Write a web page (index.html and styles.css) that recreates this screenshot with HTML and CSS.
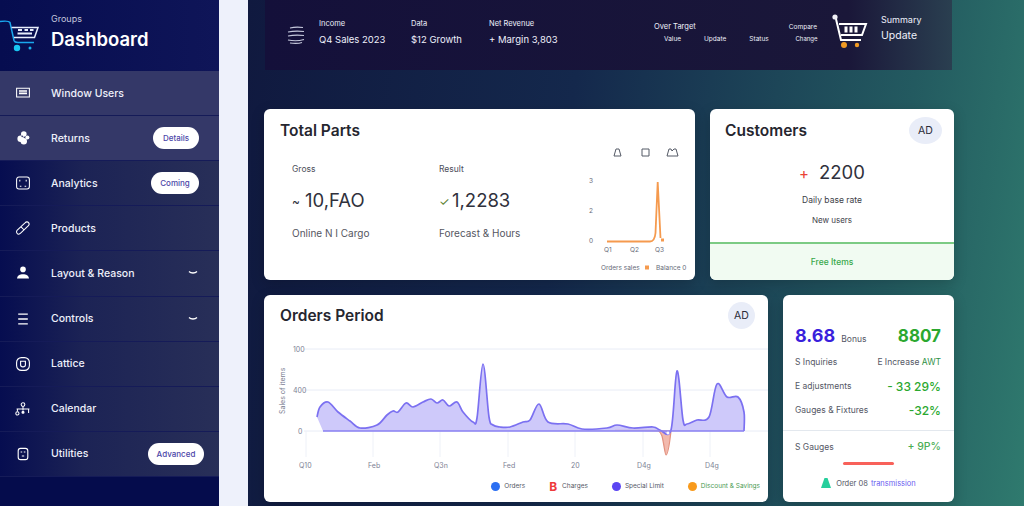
FILE: index.html
```html
<!DOCTYPE html>
<html lang="en">
  <head>
    <meta charset="UTF-8" />
    <title>Dashboard</title>
    <meta name="viewport" content="width=device-width, initial-scale=1.0" />
    <link rel="stylesheet" href="styles.css">
  </head>
  <body>
    <aside class="sidebar">
      <div class="brand">
        <svg class="brand-logo" width="40" height="36" viewBox="0 0 40 36" fill="none">
          <path d="M0 2.500C4 2 9 2 10 3.500L14 21.500C14.500 23 16 23.500 18 23.500H34" stroke="#19a7ee" stroke-width="1.500"/>
          <path d="M11.500 8.500H38L34.500 18.500H14" stroke="#e8eefc" stroke-width="1.500"/>
          <path d="M18 11H22M24.500 11H28M30 11H33.500M17.500 14.500H32" stroke="#e8eefc" stroke-width="2"/>
          <circle cx="17" cy="29" r="3.200" fill="#19c6f2"/>
          <circle cx="30" cy="29" r="1.500" fill="#19b3ee"/>
        </svg>
        <div>
          <div class="brand-small">Groups</div>
          <div class="brand-name">Dashboard</div>
        </div>
      </div>
      <nav class="nav">
        <a class="nav-item active">
          <svg class="nav-icon" viewBox="0 0 20 20" fill="none" stroke="#fff" stroke-width="1.300"><path d="M2 4H18V15H2Z"/><path d="M5 7.500H15M5 10.500H15" stroke-width="2"/></svg>
          <span>Window Users</span>
        </a>
        <a class="nav-item active">
          <svg class="nav-icon" viewBox="0 0 20 20" fill="#fff"><circle cx="11" cy="5" r="3.500"/><circle cx="7" cy="11" r="4"/><circle cx="11" cy="14" r="4"/><circle cx="15.500" cy="9.500" r="2.500"/><circle cx="9" cy="8" r="1" fill="#343868"/></svg>
          <span>Returns</span>
          <b class="pill">Details</b>
        </a>
        <a class="nav-item">
          <svg class="nav-icon" viewBox="0 0 20 20" fill="none" stroke="#fff" stroke-width="1.300"><path d="M5 2.500H15C17 2.500 18 4 18 6V14C18 16.500 17 17.500 15 17.500H5C3 17.500 2 16.500 2 14V6C2 4 3 2.500 5 2.500Z"/><path d="M6 6V8M14 6V8M6 14H8M12 14H14"/></svg>
          <span>Analytics</span>
          <b class="pill pill-wide">Coming</b>
        </a>
        <a class="nav-item">
          <svg class="nav-icon" viewBox="0 0 20 20" fill="none" stroke="#fff" stroke-width="1.300"><path d="M2.500 13L12.500 3.500C14 2 16 2 17 3.300C18 4.500 18 6 16.500 7.500L7 16.500C5.500 18 3.800 18 2.800 17C1.800 16 1.500 14.500 2.500 13Z"/><path d="M7.500 8.500L11.500 12.500"/></svg>
          <span>Products</span>
        </a>
        <a class="nav-item">
          <svg class="nav-icon" viewBox="0 0 20 20" fill="#fff"><circle cx="10" cy="5.500" r="3.500"/><path d="M2.500 17C3 13 6 11.500 10 11.500C14 11.500 17 13 17.500 17Z"/></svg>
          <span>Layout &amp; Reason</span>
          <svg class="chevron" width="10" height="6" viewBox="0 0 10 6" fill="none" stroke="#fff" stroke-width="1.300"><path d="M1 1.500C3 3.500 7 3.500 9 1.500"/></svg>
        </a>
        <a class="nav-item">
          <svg class="nav-icon" viewBox="0 0 20 20" fill="none" stroke="#fff" stroke-width="1.600"><path d="M4 4H16M4 10H16M4 16H16"/></svg>
          <span>Controls</span>
          <svg class="chevron" width="10" height="6" viewBox="0 0 10 6" fill="none" stroke="#fff" stroke-width="1.300"><path d="M1 1.500C3 3.500 7 3.500 9 1.500"/></svg>
        </a>
        <a class="nav-item">
          <svg class="nav-icon" viewBox="0 0 20 20" fill="none" stroke="#fff" stroke-width="1.400"><rect x="2" y="2" width="16" height="16" rx="6"/><path d="M7 6.500V11C7 14.500 13 14.500 13 11V6.500H7Z"/></svg>
          <span>Lattice</span>
        </a>
        <a class="nav-item">
          <svg class="nav-icon" viewBox="0 0 20 20" fill="none" stroke="#fff" stroke-width="1.300"><circle cx="10" cy="4.500" r="2.300"/><path d="M10 7V12M2 10H18M3 10V13M17 10V15"/><circle cx="3" cy="15.500" r="2"/><circle cx="10" cy="14" r="1.300" fill="#fff"/></svg>
          <span>Calendar</span>
        </a>
        <a class="nav-item">
          <svg class="nav-icon" viewBox="0 0 20 20" fill="none" stroke="#fff" stroke-width="1.400"><rect x="4" y="3" width="12" height="14" rx="3"/><path d="M7 7.500H9M11 7.500H13M8.500 12.500H11.500"/></svg>
          <span>Utilities</span>
          <b class="pill pill-big">Advanced</b>
        </a>
      </nav>
    </aside>

    <div class="strip"></div>

    <main class="main">
      <header class="topbar">
        <svg class="stack-icon" width="18" height="18" viewBox="0 0 18 18" fill="none" stroke="#c5c8dc" stroke-width="1.200"><path d="M3 2C7 1 12 1 16 1.500M1 6C6 5 12 5 17 5.500M1 10C6 9 12 9 17 9.500M1 14C6 15 12 15 17 13.500M3 17C7 17.500 12 17.500 15 16.500"/></svg>
        <div class="top-stat top-first"><small>Income</small><strong>Q4 Sales 2023</strong></div>
        <div class="top-stat top-second"><small>Data</small><strong>$12 Growth</strong></div>
        <div class="top-stat top-third"><small>Net Revenue</small><strong>+ Margin 3,803</strong></div>
        <div class="top-meta top-over">
          <small>Over Target</small>
          <div class="top-meta-row"><i>Value</i><i>Update</i><i>Status</i></div>
        </div>
        <div class="top-meta top-compare">
          <small>Compare</small>
          <div class="top-meta-row"><i>Change</i></div>
        </div>
        <svg class="top-cart" width="36" height="36" viewBox="0 0 36 36" fill="none">
          <circle cx="3" cy="3" r="2.600" fill="#f1f1f6"/>
          <path d="M4 5L9 26H29" stroke="#fff" stroke-width="2"/>
          <path d="M7 10H34L30 21H9" stroke="#fff" stroke-width="2"/>
          <path d="M14 12.500V18.500M19 12.500V18.500M24 12.500V18.500" stroke="#fff" stroke-width="3"/>
          <circle cx="12" cy="31" r="3" fill="#f09a23"/>
          <circle cx="25" cy="31" r="2.200" fill="#f09a23"/>
        </svg>
        <div class="top-summary"><small>Summary</small><strong>Update</strong></div>
      </header>

      <section class="row row-top">
        <article class="card">
          <div class="card-head"><h2>Total Parts</h2></div>
          <div class="total-body">
            <div class="stats">
              <div class="stat">
                <div class="stat-label">Gross</div>
                <div class="stat-value"><span class="mark">~</span>10,FAO</div>
                <div class="stat-sub">Online N I Cargo</div>
              </div>
              <div class="stat">
                <div class="stat-label">Result</div>
                <div class="stat-value"><span class="mark mark-green">&#10003;</span>1,2283</div>
                <div class="stat-sub">Forecast &amp; Hours</div>
              </div>
            </div>
            <svg class="mini-chart" width="115" height="130" viewBox="580 145 115 130" fill="none">
              <path d="M614 156L616 149H619L621 156ZM642 149H649V156H642ZM667 156L669 149H671L672 151L674 149H676L678 156Z" stroke="#555a66" stroke-width="1"/>
              <g class="mini-text">
                <text x="589" y="183">3</text>
                <text x="589" y="213">2</text>
                <text x="589" y="243">0</text>
                <text x="604" y="252">Q1</text>
                <text x="630" y="252">Q2</text>
                <text x="655" y="252">Q3</text>
                <text x="601" y="270">Orders sales</text>
                <text x="656" y="270">Balance 0</text>
              </g>
              <path d="M607 241.500H650C654 241.500 655 238 655.500 233L657.700 182L660.500 238" stroke="#f59a4e" stroke-width="1.800"/>
              <rect x="661" y="238.500" width="3" height="3" fill="#f59a4e"/>
              <rect x="645" y="265.500" width="4" height="4" fill="#f59a4e"/>
            </svg>
          </div>
        </article>

        <article class="card customers">
          <div class="card-head">
            <h2>Customers</h2>
            <span class="badge">AD</span>
          </div>
          <div class="cust-body">
            <div class="cust-value"><span class="cust-plus">+</span>2200</div>
            <div class="cust-line">Daily base rate</div>
            <div class="cust-line cust-line-small">New users</div>
          </div>
          <div class="cust-foot">Free Items</div>
        </article>
      </section>

      <section class="row row-bottom">
        <article class="card">
          <div class="card-head order-head">
            <h2>Orders Period</h2>
            <span class="badge badge-low">AD</span>
          </div>
          <svg class="order-chart" width="504" height="135" viewBox="264 335 504 135" fill="none">
            <path class="grid-line" d="M304 349H768M304 390H768M304 431H768"/>
            <path class="grid-tick" d="M306 431V457M373 431V457M440 431V457M508 431V457M575 431V457M643 431V457M710 431V457"/>
            <g class="axis-text">
              <text x="293" y="352">100</text>
              <text x="293" y="393">400</text>
              <text x="298" y="434">0</text>
              <text x="299" y="468">Q10</text>
              <text x="368" y="468">Feb</text>
              <text x="434" y="468">Q3n</text>
              <text x="503" y="468">Fed</text>
              <text x="571" y="468">20</text>
              <text x="637" y="468">D4g</text>
              <text x="705" y="468">D4g</text>
              <text transform="translate(285 414) rotate(-90)">Sales of items</text>
            </g>
            <path d="M615 430H652C657 430 660 430 662 436C664 444 665 455 666 455C668 455 670 440 671 431Z" fill="#f2b9ad" stroke="#e2917f" stroke-width="1.200"/>
            <path id="orderFill" fill="#c6bff9" fill-opacity="0.85"/>
            <path id="orderLine" stroke="#7b70f1" stroke-width="1.700"/>
            <path d="M323 431H744" stroke="#8a80f2" stroke-width="1.500"/>
            <circle cx="668" cy="433" r="1.500" fill="#fff"/>
          </svg>
          <div class="legend">
            <span class="legend-item"><i class="dot dot-blue"></i>Orders</span>
            <span class="legend-item"><b class="legend-b">B</b>Charges</span>
            <span class="legend-item"><i class="dot dot-purple"></i>Special Limit</span>
            <span class="legend-item legend-green"><i class="dot dot-orange"></i>Discount &amp; Savings</span>
          </div>
        </article>

        <article class="card side">
          <div class="side-top">
            <span class="side-big blue">8.68</span>
            <span class="side-note">Bonus</span>
            <span class="side-big green">8807</span>
          </div>
          <div class="side-rows">
            <div class="side-row"><span>S Inquiries</span><span>E Increase <em>AWT</em></span></div>
            <div class="side-row"><span>E adjustments</span><strong>- 33 29%</strong></div>
            <div class="side-row"><span>Gauges &amp; Fixtures</span><strong>-32%</strong></div>
            <div class="side-row side-row-line"><span>S Gauges</span><strong class="light">+ 9P%</strong></div>
          </div>
          <div class="side-bar"></div>
          <div class="side-foot">
            <svg width="10" height="10" viewBox="0 0 10 10" fill="#26cf9c"><path d="M3.500 0H6.500L10 10H0Z"/></svg>
            <span>Order 08</span><em>transmission</em>
          </div>
        </article>
      </section>
    </main>
    <script src="chart.js"></script>
  </body>
</html>
```

FILE: styles.css
```css
* {
  box-sizing: border-box;
}

html,
body {
  margin: 0;
  height: 506px;
  overflow: hidden;
}

body {
  display: flex;
  font-family: Inter, "Liberation Sans", sans-serif;
  background: #0f1c40;
}

.sidebar {
  width: 219px;
  flex: none;
  display: flex;
  flex-direction: column;
  color: white;
  background: #050c4c;
}

.brand {
  height: 71px;
  display: flex;
  align-items: center;
  gap: 11px;
  background: linear-gradient(90deg, #060d50, #0f1558);
}

.brand-logo {
  flex: none;
  margin-top: 2px;
}

.brand-small {
  font-size: 9px;
  line-height: 12px;
  color: #c3c6dc;
  margin-top: -5px;
}

.brand-name {
  font-size: 18.500px;
  font-weight: 600;
  line-height: 28px;
}

.nav-item {
  height: 45.110px;
  display: flex;
  align-items: center;
  padding: 0 15px;
  font-size: 10.500px;
  font-weight: 500;
  color: #eef0fa;
  border-bottom: 1px solid #151b58;
  background: linear-gradient(90deg, #060d50, #1c2355 38%, #282f58);
}

.nav-item.active {
  background: #343868;
}

.nav-item > span {
  flex: 1;
}

.nav-icon {
  width: 16px;
  height: 16px;
  flex: none;
  margin-right: 20px;
}

.pill {
  width: 46px;
  height: 22px;
  flex: none;
  display: flex;
  align-items: center;
  justify-content: center;
  margin-right: 5px;
  border-radius: 11px;
  background: white;
  color: #4b46a8;
  font-size: 8px;
  font-weight: 500;
}

.pill-wide {
  width: 48px;
}

.pill-big {
  width: 56px;
  margin-right: 0;
}

.chevron {
  margin-right: 6px;
}

.strip {
  width: 29px;
  flex: none;
  background: #eef1fb;
}

.main {
  flex: 1;
  padding: 0 70px 0 16px;
  background: linear-gradient(98deg, #10193f 0%, #14284c 40%, #235a60 80%, #2f7a6e 100%);
}

.topbar {
  height: 70px;
  margin: 0 2px 0 1px;
  display: flex;
  align-items: center;
  padding-left: 22px;
  color: #eef0fa;
  background: linear-gradient(90deg, #14103a, #1a1739 85%, #2a3f50);
}

.stack-icon {
  flex: none;
}

.top-stat {
  flex: none;
  margin-top: -6px;
}

.top-stat small {
  display: block;
  font-size: 7.500px;
  line-height: 12px;
  margin-bottom: 3px;
}

.top-stat strong {
  display: block;
  font-size: 9.500px;
  font-weight: 400;
  line-height: 14px;
}

.top-first {
  width: 92px;
  margin-left: 14px;
}

.top-second {
  width: 78px;
}

.top-third {
  width: 165px;
}

.top-meta {
  flex: none;
  margin-top: -4px;
}

.top-meta small {
  display: block;
  font-size: 7.500px;
  line-height: 12px;
}

.top-meta-row {
  display: flex;
  gap: 23px;
  font-size: 6.500px;
  line-height: 12px;
}

.top-meta-row i {
  font-style: normal;
}

.top-over {
  width: 136px;
}

.top-over .top-meta-row {
  padding-left: 10px;
}

.top-compare {
  width: 43px;
  padding-right: 16px;
  text-align: right;
}

.top-compare small {
  font-size: 6.500px;
  margin-left: -10px;
}

.top-compare .top-meta-row {
  justify-content: flex-end;
  font-size: 6px;
  margin-right: -0.500px;
}

.top-cart {
  flex: none;
  margin: -6px 0 0 -1px;
}

.top-summary {
  margin: -14px 0 0 13px;
}

.top-summary small {
  display: block;
  font-size: 9px;
  line-height: 12px;
  margin-bottom: 3px;
}

.top-summary strong {
  display: block;
  font-size: 10.500px;
  line-height: 14px;
  font-weight: 400;
}

.row {
  display: grid;
  gap: 15px;
}

.row-top {
  margin-top: 39px;
  grid-template-columns: 431px 244px;
  height: 171px;
}

.row-bottom {
  margin-top: 15px;
  grid-template-columns: 504px 171px;
  height: 207px;
}

.card {
  background: white;
  border-radius: 6px;
  overflow: hidden;
  box-shadow: 0 4px 14px rgba(0, 0, 0, 0.18);
  color: #2a2b36;
}

.card-head {
  height: 40px;
  display: flex;
  align-items: center;
  justify-content: space-between;
  padding: 2px 12px 0 16px;
}

.order-head {
  padding-top: 0;
  padding-right: 13px;
}

h2 {
  margin: 0;
  font-size: 15.500px;
  font-weight: 600;
  color: #26262f;
}

.badge {
  width: 33px;
  height: 27px;
  display: flex;
  align-items: center;
  justify-content: center;
  border-radius: 50%;
  background: #e9edf8;
  font-size: 10.500px;
}

.badge-low {
  width: 27px;
}

.total-body {
  display: flex;
}

.stats {
  flex: 1;
  min-width: 0;
  display: flex;
  padding: 14px 0 0 28px;
}

.stat {
  width: 147px;
  flex: none;
}

.stat-label {
  font-size: 8.500px;
  line-height: 12px;
  color: #4c4e5a;
}

.stat-value {
  margin-top: 12px;
  font-size: 18.500px;
  line-height: 26px;
  color: #30313c;
}

.mark {
  display: inline-block;
  width: 13px;
  font-size: 12px;
  vertical-align: 1px;
}

.mark-green {
  color: #5b7f2e;
}

.stat-sub {
  margin-top: 11px;
  font-size: 10px;
  line-height: 14px;
  color: #55565f;
}

.mini-chart {
  flex: none;
  margin-top: -4px;
}

.mini-text {
  font-size: 6.500px;
  fill: #666a78;
}

.customers {
  display: flex;
  flex-direction: column;
}

.customers .card-head {
  padding-left: 15px;
}

.cust-body {
  flex: 1;
  text-align: center;
  padding-top: 10px;
}

.cust-value {
  font-size: 18.500px;
  line-height: 26px;
  color: #30313c;
}

.cust-plus {
  color: #ea4335;
  font-size: 15px;
  margin-right: 10px;
}

.cust-line {
  margin-top: 6px;
  font-size: 8.500px;
  line-height: 14px;
  color: #3d3e48;
}

.cust-line-small {
  font-size: 8px;
}

.cust-foot {
  height: 38px;
  display: flex;
  align-items: center;
  justify-content: center;
  border-top: 2px solid #7ccb84;
  background: #f1fbf2;
  color: #36a84a;
  font-size: 8.500px;
  font-weight: 500;
}

.order-chart {
  display: block;
}

.grid-line {
  stroke: #e8ecf6;
  stroke-width: 1;
}

.grid-tick {
  stroke: #eef1f8;
  stroke-width: 1;
}

.axis-text {
  font-size: 7px;
  fill: #7d8194;
}

.legend {
  height: 32px;
  display: flex;
  align-items: center;
  justify-content: flex-end;
  gap: 24px;
  padding-right: 8px;
  font-size: 6.500px;
  color: #555866;
}

.legend-item {
  display: flex;
  align-items: center;
  gap: 4px;
}

.legend-green {
  color: #4c9a52;
}

.dot {
  width: 9px;
  height: 9px;
  border-radius: 50%;
}

.dot-blue {
  background: #2b6ff2;
}

.dot-purple {
  background: #5b45f2;
}

.dot-orange {
  background: #f89a1c;
}

.legend-b {
  color: #ee3b3b;
  font-size: 12px;
  margin-right: 1px;
}

.side {
  font-size: 8.500px;
  color: #555866;
}

.side-top {
  display: flex;
  align-items: baseline;
  padding: 29px 13px 0 12px;
}

.side-big {
  font-size: 18px;
  font-weight: 700;
  line-height: 24px;
}

.side-big.green {
  margin-left: auto;
  font-size: 17px;
}

.blue {
  color: #3a1fdc;
}

.green {
  color: #2ba82f;
}

.side-note {
  margin-left: 6px;
}

.side-rows {
  padding-top: 2px;
}

.side-row {
  height: 24px;
  display: flex;
  align-items: center;
  justify-content: space-between;
  padding: 0 13px 0 12px;
}

.side-row strong {
  font-size: 12px;
  font-weight: 500;
  color: #2ba82f;
}

.side-row strong.light {
  font-size: 10.500px;
  color: #4cae55;
}

.side-row em {
  font-style: normal;
  color: #2f8f46;
}

.side-row-line {
  height: 32px;
  margin-top: 8px;
  border-top: 1px solid #e3e8ee;
}

.side-bar {
  width: 51px;
  height: 3px;
  margin: 0 auto;
  border-radius: 2px;
  background: #f8615a;
}

.side-foot {
  display: flex;
  align-items: center;
  justify-content: center;
  gap: 5px;
  margin-top: 13px;
  font-size: 7.500px;
}

.side-foot em {
  font-style: normal;
  color: #6a5cf0;
  margin-left: -2px;
}
```

FILE: chart.js
```js
// order area, points are page coordinates read off the design
const pts = [
  [317, 417], [320, 407], [328, 402], [338, 412], [350, 421], [360, 428], [377, 425],
  [387, 415], [393, 411], [398, 412], [406, 403], [413, 407], [423, 402], [431, 399],
  [437, 403], [443, 400], [449, 406], [457, 402], [463, 412], [473, 422], [477, 418],
  [483, 364], [489, 417], [493, 425], [500, 427], [510, 427], [523, 422], [530, 420],
  [539, 404], [548, 422], [568, 424], [582, 429], [607, 428], [617, 425], [633, 428],
  [653, 427], [660, 430], [671, 430], [677, 371], [683, 420], [687, 424], [697, 420],
  [709, 417], [717, 384], [727, 397], [738, 397], [744, 412], [744, 431],
];

function smooth(p) {
  let d = `M${p[0][0]} ${p[0][1]}`;
  for (let i = 0; i < p.length - 1; i++) {
    const a = p[i - 1] || p[i];
    const b = p[i];
    const c = p[i + 1];
    const e = p[i + 2] || c;
    const x1 = b[0] + (c[0] - a[0]) / 6;
    const y1 = b[1] + (c[1] - a[1]) / 6;
    const x2 = c[0] - (e[0] - b[0]) / 6;
    const y2 = c[1] - (e[1] - b[1]) / 6;
    d += `C${x1} ${y1} ${x2} ${y2} ${c[0]} ${c[1]}`;
  }
  return d;
}

const line = smooth(pts);
document.getElementById("orderLine").setAttribute("d", line);
document.getElementById("orderFill").setAttribute("d", line + "H323Z");
```
